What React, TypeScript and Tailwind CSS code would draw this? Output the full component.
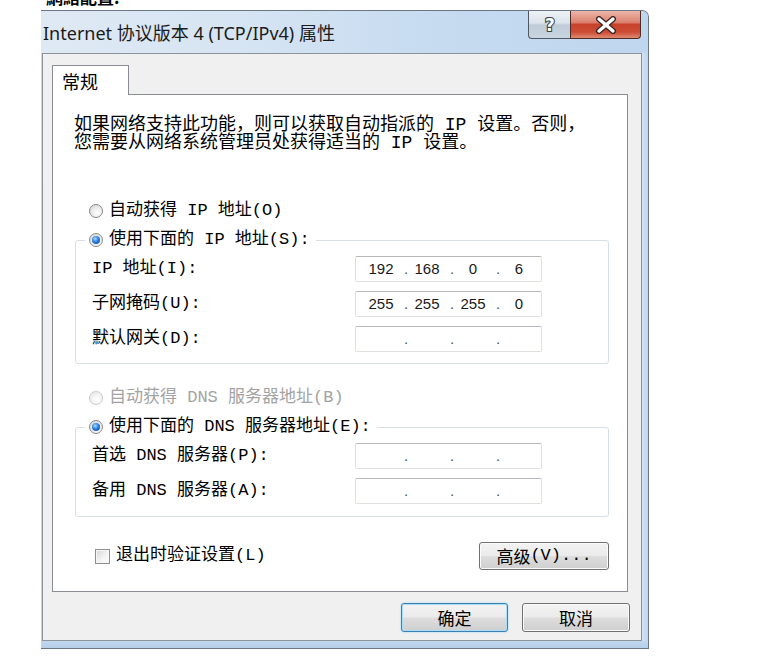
import React, { Fragment } from "react";

const body = "font-['Liberation_Mono','Noto_Sans_CJK_SC',monospace] text-[17px] leading-[18px] text-black";

function Radio({ checked, disabled }: { checked?: boolean; disabled?: boolean }) {
  return (
    <span
      className={
        "inline-flex w-[14px] h-[14px] shrink-0 rounded-full border items-center justify-center " +
        (disabled
          ? "border-[#c9c9c9] bg-[radial-gradient(circle_at_60%_65%,#ffffff_0%,#f0f0f0_60%,#e2e2e2_100%)]"
          : "border-[#8a8a8a] bg-[radial-gradient(circle_at_60%_65%,#ffffff_0%,#e9e9e9_55%,#c9c9c9_100%)]")
      }
    >
      {checked && (
        <span className="w-[8px] h-[8px] rounded-full bg-[radial-gradient(circle_at_40%_35%,#a9dcff_0%,#2a7ee0_45%,#0d3f91_100%)]" />
      )}
    </span>
  );
}

function IpBox({ v }: { v?: string[] }) {
  const parts = v ?? ["", "", "", ""];
  return (
    <div className="w-[187px] h-[26px] border border-[#dde1e6] border-t-[#b5b8bd] rounded-[2px] bg-white flex items-center pl-[7px] font-['Liberation_Sans','DejaVu_Sans',sans-serif] text-[15px] leading-[18px] text-[#1a1a1a]">
      {parts.map((p, i) => (
        <Fragment key={i}>
          <span className="w-[40px] text-center pr-[4px]">{p}</span>
          {i < 3 && <span className="w-[6px] text-center text-[#555]">.</span>}
        </Fragment>
      ))}
    </div>
  );
}

function Row({ label, v }: { label: string; v?: string[] }) {
  return (
    <div className="flex items-center h-[26px]">
      <span className="w-[263px]">{label}</span>
      <IpBox v={v} />
    </div>
  );
}

function Btn({ children, def, w, h }: { children: React.ReactNode; def?: boolean; w: string; h: string }) {
  return (
    <div
      className={
        "flex items-center justify-center rounded-[3px] border font-['Noto_Sans_CJK_SC',sans-serif] text-[17px] leading-[20px] text-black bg-[linear-gradient(180deg,#f3f3f3_0%,#ebebeb_48%,#dddddd_52%,#cfcfcf_100%)] " +
        (def
          ? "border-[#3c7fb1] shadow-[inset_0_0_0_1px_#a9ddf7,0_0_2px_#8fd0f3] "
          : "border-[#707070] shadow-[inset_0_0_0_1px_#fbfbfb] ") +
        w +
        " " +
        h
      }
    >
      {children}
    </div>
  );
}

export default function App() {
  return (
    <div className="w-[767px] h-[659px] bg-white overflow-hidden">
      <div className="h-[10px] overflow-hidden pl-[46px]">
        <div className="-mt-[13px] font-['Noto_Sans_CJK_SC',sans-serif] font-bold text-[17px] leading-[20px] text-black">
          網絡配置:
        </div>
      </div>
      <div className="ml-[41px] w-[608px] border-t border-r border-b border-[#6a7683] rounded-tr-[7px] bg-[linear-gradient(180deg,#c4d9ef_0%,#bcd4ee_100%)] flex flex-col">
        <div className="h-[42px] flex justify-between items-start rounded-tr-[6px] bg-[linear-gradient(90deg,#dfe9f4_0%,#d5e4f3_35%,#c6dbf0_65%,#bfd6ee_100%)]">
          <span className="pl-[2px] pt-[10px] font-['Noto_Sans','Noto_Sans_CJK_SC',sans-serif] text-[18px] leading-[24px] text-[#1b1b1b]">
            Internet 协议版本 4 (TCP/IPv4) 属性
          </span>
          <div className="flex mr-[7px]">
            <div className="w-[42px] h-[28px] border-l border-b border-[#4e5763] rounded-bl-[4px] bg-[linear-gradient(180deg,#eef2f6_0%,#dbe3eb_45%,#bfcbd8_52%,#c9d5e1_100%)] flex items-center justify-center">
              <svg width="16" height="20" viewBox="0 0 16 20">
                <text x="8" y="16" textAnchor="middle" fontFamily="DejaVu Sans, sans-serif" fontWeight="bold" fontSize="17" fill="#ffffff" stroke="#3c434c" strokeWidth="2.2" paintOrder="stroke">?</text>
              </svg>
            </div>
            <div className="w-[71px] h-[28px] border-l border-b border-r border-[#4d2b27] rounded-br-[4px] bg-[linear-gradient(180deg,#ebb5a9_0%,#dd8270_42%,#c8422c_50%,#cc4c35_78%,#e18a72_100%)] flex items-center justify-center">
              <svg width="24" height="18" viewBox="0 0 24 18">
                <path d="M5 3 L19 15 M19 3 L5 15" stroke="#3a2623" strokeWidth="6" strokeLinecap="round" />
                <path d="M5 3 L19 15 M19 3 L5 15" stroke="#ffffff" strokeWidth="3.4" strokeLinecap="round" />
              </svg>
            </div>
          </div>
        </div>
        <div className="flex">
          <div className={"ml-[1px] w-[600px] h-[588px] border border-[#8d939b] bg-[#f0f0f0] flex flex-col " + body}>
            <div className="mt-[11px] ml-[9px] relative z-[1] w-[77px] h-[30px] border border-b-0 border-[#898c95] bg-white flex items-center pl-[9px] font-['Noto_Sans_CJK_SC',sans-serif] text-[18px]">
              常规
            </div>
            <div className="-mt-[1px] ml-[9px] w-[576px] h-[498px] border border-[#898c95] bg-white pl-[21px] pt-[21px] flex flex-col">
              <div className="text-[18px] leading-[18px]">
                如果网络支持此功能，则可以获取自动指派的 IP 设置。否则，
                <br />
                您需要从网络系统管理员处获得适当的 IP 设置。
              </div>
              <div className="mt-[50px] pl-[15px] flex items-center gap-[6px] h-[18px]">
                <Radio />
                <span>自动获得 IP 地址(O)</span>
              </div>
              <fieldset className="mt-[11px] ml-[1px] w-[534px] border border-[#d5dfe5] rounded-[3px]">
                <legend className="ml-[9px] pl-[4px] pr-[6px] bg-white">
                  <span className="inline-flex items-center gap-[6px] h-[18px]">
                    <Radio checked />
                    <span>使用下面的 IP 地址(S):</span>
                  </span>
                </legend>
                <div className="pt-[7px] pb-[11px] pl-[16px] flex flex-col gap-[9px]">
                  <Row label="IP 地址(I):" v={["192", "168", "0", "6"]} />
                  <Row label="子网掩码(U):" v={["255", "255", "255", "0"]} />
                  <Row label="默认网关(D):" />
                </div>
              </fieldset>
              <div className="mt-[25px] pl-[15px] flex items-center gap-[6px] h-[18px] text-[#a3a3a3]">
                <Radio disabled />
                <span>自动获得 DNS 服务器地址(B)</span>
              </div>
              <fieldset className="mt-[11px] ml-[1px] w-[534px] border border-[#d5dfe5] rounded-[3px]">
                <legend className="ml-[9px] pl-[4px] pr-[6px] bg-white">
                  <span className="inline-flex items-center gap-[6px] h-[18px]">
                    <Radio checked />
                    <span>使用下面的 DNS 服务器地址(E):</span>
                  </span>
                </legend>
                <div className="pt-[7px] pb-[12px] pl-[16px] flex flex-col gap-[9px]">
                  <Row label="首选 DNS 服务器(P):" />
                  <Row label="备用 DNS 服务器(A):" />
                </div>
              </fieldset>
              <div className="mt-[25px] ml-[1px] w-[534px] flex items-center justify-between">
                <div className="pl-[20px] flex items-center gap-[6px]">
                  <span className="w-[15px] h-[15px] border border-[#8f8f8f] bg-[linear-gradient(135deg,#d6d6d6_0%,#f4f4f4_60%,#ffffff_100%)] shadow-[inset_0_0_0_1px_#f7f7f7]" />
                  <span>退出时验证设置(L)</span>
                </div>
                <Btn w="w-[130px]" h="h-[28px]">
                  <span className="font-['Noto_Sans_CJK_SC',sans-serif]">高级</span>
                  <span className="font-['Liberation_Mono',monospace]">(V)...</span>
                </Btn>
              </div>
            </div>
            <div className="mt-[11px] pr-[11px] flex justify-end gap-[14px]">
              <Btn def w="w-[107px]" h="h-[29px]">确定</Btn>
              <Btn w="w-[108px]" h="h-[29px]">取消</Btn>
            </div>
          </div>
          <div className="w-[6px] bg-[linear-gradient(90deg,#d4e4f4_0%,#bcd4ee_100%)]" />
        </div>
        <div className="h-[7px] bg-[linear-gradient(180deg,#c0d7ef_0%,#b6cfea_100%)]" />
      </div>
    </div>
  );
}
